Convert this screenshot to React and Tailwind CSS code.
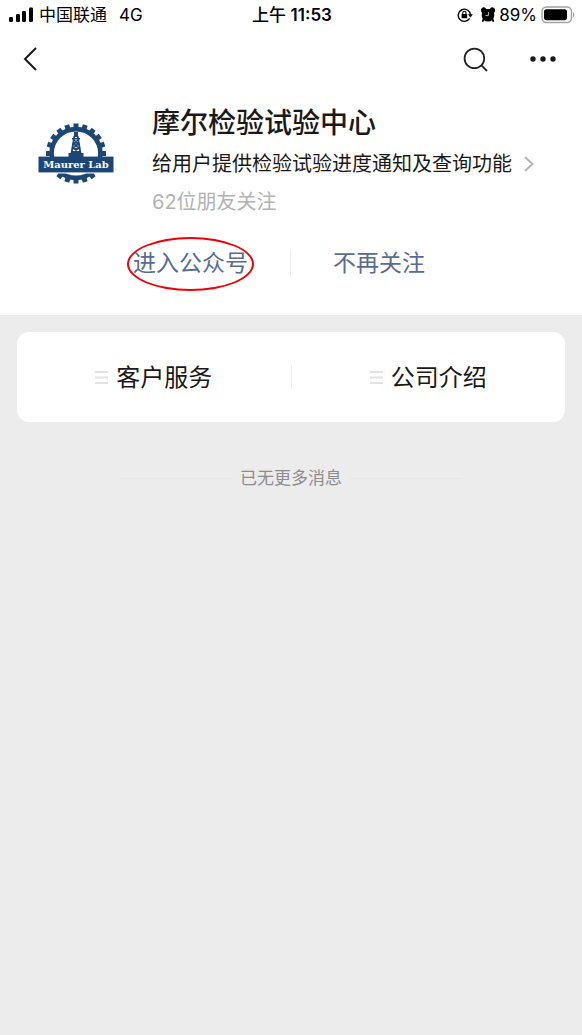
import React from "react";

const menus = ["客户服务", "公司介绍"];

// 20 teeth around the gear
const teeth = Array.from({ length: 20 }, (_, i) => i * 18);

const Signal = () => (
  <svg width="25" height="16" viewBox="0 0 25 16" aria-hidden="true">
    <rect x="1" y="10" width="4" height="5" rx="1.2" />
    <rect x="8" y="7" width="4" height="8" rx="1.2" />
    <rect x="14" y="4" width="4" height="11" rx="1.2" />
    <rect x="21" y="0.5" width="4" height="14.5" rx="1.2" />
  </svg>
);

const RotationLock = () => (
  <svg width="16" height="16" viewBox="0 0 16 16" fill="none" aria-hidden="true">
    <path d="M12.6 11.4A6.1 6.1 0 1 1 13.4 7.6" stroke="#000" strokeWidth="1.4" />
    <path d="M10.9 7.2h5l-2.5 3.2z" fill="#000" />
    <rect x="4.6" y="7" width="5.6" height="4.3" rx="0.6" fill="#000" />
    <path d="M5.8 7.2V5.9a1.6 1.6 0 0 1 3.2 0v1.3" stroke="#000" strokeWidth="1.1" />
  </svg>
);

const Alarm = () => (
  <svg width="14" height="16" viewBox="0 0 14 16" aria-hidden="true">
    <circle cx="7" cy="8.2" r="6.3" />
    <path d="M0.6 5.2A2.6 2.6 0 0 1 4.8 1.4L7 3l2.2-1.6a2.6 2.6 0 0 1 4.2 3.8L12 7H2z" />
    <path d="M2.8 12l-1 2M11.2 12l1 2" stroke="#000" strokeWidth="1.8" strokeLinecap="round" />
    <path d="M7.4 5v3.6H4.4" stroke="#ccc" strokeWidth="0.9" fill="none" />
  </svg>
);

const Battery = () => (
  <svg width="35" height="18" viewBox="0 0 35 18" aria-hidden="true">
    <rect x="1" y="1" width="29.5" height="15.5" rx="4.5" fill="#fff" stroke="#a3a3a3" strokeWidth="1.4" />
    <rect x="3" y="3.2" width="23" height="11" rx="2.6" />
    <path d="M32 6.2c1.8.6 1.8 4.6 0 5.2z" fill="#a3a3a3" />
  </svg>
);

const Logo = () => (
  <svg width="76" height="62" viewBox="0 0 76 62" role="img" aria-label="Maurer Lab">
    <g fill="#1b4777">
      {teeth.map((deg) => (
        <rect key={deg} x="35.5" y="1.5" width="5" height="6" transform={`rotate(${deg} 38 31.5)`} />
      ))}
    </g>
    <circle cx="38" cy="31.5" r="24.4" fill="#fff" stroke="#1b4777" strokeWidth="4.6" />
    <g stroke="#1b4777" fill="none" strokeWidth="1.3">
      <path d="M36.4 14L33.4 32M39.6 14L42.6 32" strokeWidth="1.8" />
      <path d="M36 18l5 4-6.4 4 8 5M40 18l-5 4 6.4 4-8 5M35.4 22h5.2M34.4 26.5h7.2" />
    </g>
    <path d="M36 10h4v5h-4zM34 16h8v1.4h-8zM33.5 29h9v2h3v4.5h-15V31h3z" fill="#1b4777" />
    <path d="M10 50h56v1.6H10z" fill="#fff" />
    <rect x="0.5" y="34.6" width="75" height="15.8" fill="#1b4777" />
    <text
      x="38"
      y="46.4"
      textAnchor="middle"
      fill="#fff"
      className="font-['DejaVu_Serif'] text-[10px] font-bold"
    >
      Maurer Lab
    </text>
  </svg>
);

const MenuLines = () => (
  <svg width="13" height="13" viewBox="0 0 13 13" stroke="#e2e2e2" strokeWidth="1.8" aria-hidden="true">
    <path d="M0 1h13M0 6.5h13M0 12h13" />
  </svg>
);

const StatusBar = () => (
  <div className="grid h-8 grid-cols-[1fr_auto_1fr] items-center pr-1.5 pl-2 pb-0.5 text-[17px] leading-6 text-black">
    <div className="flex items-center gap-1.5">
      <Signal />
      <span>中国联通</span>
      <span className="ml-1.5">4G</span>
    </div>
    <div className="font-medium">上午 <span className="font-semibold">11:53</span></div>
    <div className="flex items-center justify-end gap-1">
      <RotationLock />
      <span className="ml-1"><Alarm /></span>
      <span>89%</span>
      <Battery />
    </div>
  </div>
);

const NavBar = () => (
  <nav className="flex h-14 items-center pr-6 pb-0.5 pl-5">
    <button type="button" aria-label="返回">
      <svg width="20" height="26" viewBox="0 0 20 26" fill="none" stroke="#191919" strokeWidth="2">
        <path d="M16 2L5 13l11 11" />
      </svg>
    </button>
    <button type="button" aria-label="搜索" className="ml-auto">
      <svg width="26" height="26" viewBox="0 0 26 26" fill="none" stroke="#222" strokeWidth="1.8">
        <circle cx="12.4" cy="12.4" r="9.8" />
        <path d="M19.2 19.2L25 25" />
      </svg>
    </button>
    <button type="button" aria-label="更多" className="ml-10">
      <svg width="30" height="26" viewBox="0 0 30 26" fill="#191919">
        <circle cx="5" cy="13" r="2.7" />
        <circle cx="15" cy="13" r="2.7" />
        <circle cx="25" cy="13" r="2.7" />
      </svg>
    </button>
  </nav>
);

export default function App() {
  return (
    <div className="min-h-screen bg-[#ececec] font-[Inter,'Noto_Sans_CJK_SC',sans-serif] text-[#191919]">
      <header className="bg-white pb-9">
        <StatusBar />
        <NavBar />

        <section className="flex items-start pt-4 pl-[38px]">
          <div className="pt-[18px]">
            <Logo />
          </div>
          <div className="ml-[38px]">
            <h1 className="text-[28px] leading-[38px] font-medium">摩尔检验试验中心</h1>
            <a href="#detail" className="mt-2 flex items-center gap-3 text-xl leading-7">
              给用户提供检验试验进度通知及查询功能
              <svg width="10" height="16" viewBox="0 0 10 16" fill="none" stroke="#b2b2b2" strokeWidth="1.8">
                <path d="M1 1l7.5 7L1 15" />
              </svg>
            </a>
            <p className="mt-2.5 text-xl leading-7 text-[#b2b2b2]">62位朋友关注</p>
          </div>
        </section>

        <div className="mt-[31px] flex items-center justify-center gap-[42px] pr-6 text-[23px] leading-8 text-[#576b95]">
          <a href="#account" className="relative">
            进入公众号
            <span className="absolute -inset-x-1.5 -top-2.5 -bottom-3 rounded-[50%] border-2 border-[#f00008]" />
          </a>
          <span className="h-7 w-px bg-[#ececec]" />
          <button type="button">不再关注</button>
        </div>
      </header>

      <main className="px-[17px] pt-[17px]">
        <div className="flex items-center rounded-xl bg-white py-7">
          {menus.map((menu, i) => (
            <React.Fragment key={menu}>
              {i > 0 && <span className="h-6 w-px bg-[#ececec]" />}
              <button type="button" className="flex flex-1 items-center justify-center gap-2 text-2xl leading-8">
                <MenuLines />
                <span className="pt-0.5">{menu}</span>
              </button>
            </React.Fragment>
          ))}
        </div>

        <div className="mt-11 flex items-center justify-center gap-2 text-[17px] leading-6 text-[#8c8c8c]">
          <span className="h-px w-28 bg-[#e6e6e6]" />
          <p>已无更多消息</p>
          <span className="h-px w-28 bg-[#e6e6e6]" />
        </div>
      </main>
    </div>
  );
}
